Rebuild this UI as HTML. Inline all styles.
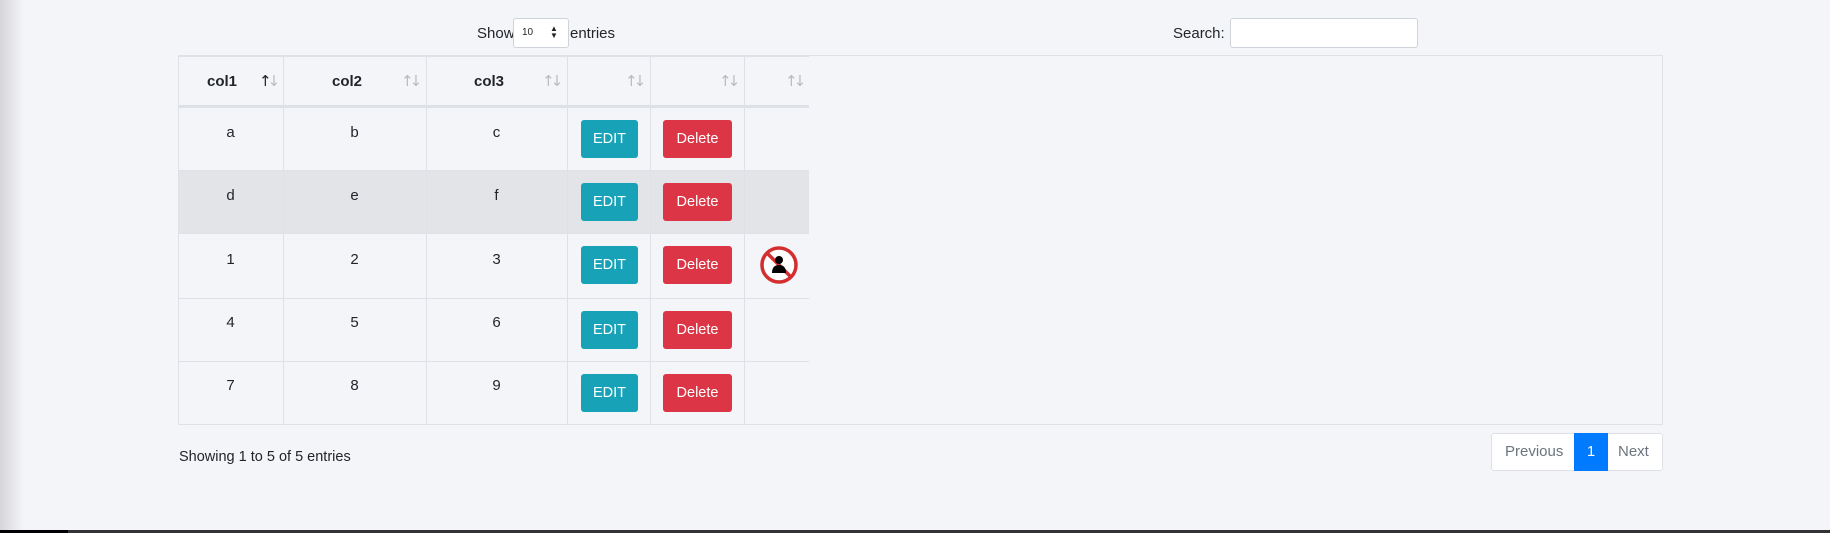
<!DOCTYPE html>
<html><head><meta charset="utf-8"><style>
*{box-sizing:border-box;margin:0;padding:0}
body{width:1830px;height:533px;overflow:hidden;background:#f4f5f9;font-family:"Liberation Sans",sans-serif;color:#212529;position:relative;font-size:15px}
.a{position:absolute}
.shade{left:0;top:0;width:24px;height:533px;background:linear-gradient(to right,#d6d6da,#f4f5f9)}
.bar{left:0;top:530px;width:1830px;height:3px;background:#333}
.bar2{left:0;top:530px;width:68px;height:3px;background:#000}
.hl{background:#dee2e6;height:1px}
.vl{background:#dee2e6;width:1px}
.t{text-align:center;font-size:15px;line-height:20px}
.b{font-weight:bold}
.btn{color:#fff;border-radius:3px;text-align:center;font-size:14.5px;line-height:38px;height:38px}
.edit{background:#17a2b8;width:57px}
.del{background:#dc3545;width:69px}
.sort{color:#bbb;font-size:15px;letter-spacing:-4px;font-family:"DejaVu Sans",sans-serif;line-height:16px}
</style></head><body>
<div class="a shade"></div>
<div class="a" style="left:477px;top:25px;font-size:15px">Show</div>
<div class="a" style="left:513px;top:18px;width:56px;height:30px;background:#fff;border:1px solid #ced4da;border-radius:3px;font-size:10px;padding:8px 0 0 8px">10<span style="position:absolute;left:36px;top:6px;font-size:8px;line-height:7px">▲<br>▼</span></div>
<div class="a" style="left:570px;top:25px;font-size:15px">entries</div>
<div class="a" style="left:1173px;top:25px;font-size:15px">Search:</div>
<div class="a" style="left:1230px;top:18px;width:188px;height:30px;background:#fff;border:1px solid #ced4da;border-radius:3px"></div>

<div class="a" style="left:178px;top:55px;width:1485px;height:370px;border:1px solid #dee2e6"></div>
<div class="a hl" style="left:178px;top:55px;width:631px;height:2px"></div>
<div class="a hl" style="left:178px;top:105px;width:631px;height:3px"></div>
<div class="a" style="left:179px;top:171px;width:630px;height:63px;background:#e3e4e8"></div>
<div class="a hl" style="left:178px;top:170px;width:631px"></div>
<div class="a hl" style="left:178px;top:233px;width:631px"></div>
<div class="a hl" style="left:178px;top:298px;width:631px"></div>
<div class="a hl" style="left:178px;top:361px;width:631px"></div>
<div class="a vl" style="left:283px;top:55px;height:370px"></div>
<div class="a vl" style="left:426px;top:55px;height:370px"></div>
<div class="a vl" style="left:567px;top:55px;height:370px"></div>
<div class="a vl" style="left:650px;top:55px;height:370px"></div>
<div class="a vl" style="left:744px;top:55px;height:370px"></div>

<div class="a t b" style="left:207px;top:72px">col1</div>
<div class="a t b" style="left:332px;top:72px">col2</div>
<div class="a t b" style="left:474px;top:72px">col3</div>
<div class="a sort" style="left:259px;top:73px"><span style="color:#222">↑</span>↓</div>
<div class="a sort" style="left:401px;top:73px">↑↓</div>
<div class="a sort" style="left:542px;top:73px">↑↓</div>
<div class="a sort" style="left:625px;top:73px">↑↓</div>
<div class="a sort" style="left:719px;top:73px">↑↓</div>
<div class="a sort" style="left:785px;top:73px">↑↓</div>

<div class="a t" style="left:178px;top:123px;width:105px">a</div><div class="a t" style="left:283px;top:123px;width:143px">b</div><div class="a t" style="left:426px;top:123px;width:141px">c</div>
<div class="a t" style="left:178px;top:186px;width:105px">d</div><div class="a t" style="left:283px;top:186px;width:143px">e</div><div class="a t" style="left:426px;top:186px;width:141px">f</div>
<div class="a t" style="left:178px;top:250px;width:105px">1</div><div class="a t" style="left:283px;top:250px;width:143px">2</div><div class="a t" style="left:426px;top:250px;width:141px">3</div>
<div class="a t" style="left:178px;top:313px;width:105px">4</div><div class="a t" style="left:283px;top:313px;width:143px">5</div><div class="a t" style="left:426px;top:313px;width:141px">6</div>
<div class="a t" style="left:178px;top:376px;width:105px">7</div><div class="a t" style="left:283px;top:376px;width:143px">8</div><div class="a t" style="left:426px;top:376px;width:141px">9</div>

<div class="a btn edit" style="left:581px;top:120px">EDIT</div><div class="a btn del" style="left:663px;top:120px">Delete</div>
<div class="a btn edit" style="left:581px;top:183px">EDIT</div><div class="a btn del" style="left:663px;top:183px">Delete</div>
<div class="a btn edit" style="left:581px;top:246px">EDIT</div><div class="a btn del" style="left:663px;top:246px">Delete</div>
<div class="a btn edit" style="left:581px;top:311px">EDIT</div><div class="a btn del" style="left:663px;top:311px">Delete</div>
<div class="a btn edit" style="left:581px;top:374px">EDIT</div><div class="a btn del" style="left:663px;top:374px">Delete</div>

<svg class="a" style="left:759px;top:245px" width="40" height="40" viewBox="0 0 40 40">
<circle cx="20" cy="20" r="17" fill="#fff" stroke="#d32f2f" stroke-width="3.5"/>
<line x1="8" y1="8" x2="32" y2="32" stroke="#d32f2f" stroke-width="3.5"/>
<circle cx="20" cy="15" r="4" fill="#000"/>
<path d="M13 28 Q13 20 20 20 Q27 20 27 28 Z" fill="#000"/>
</svg>

<div class="a" style="left:179px;top:449px;font-size:14.5px">Showing 1 to 5 of 5 entries</div>
<div class="a" style="left:1491px;top:433px;width:172px;height:38px;background:#fff;border:1px solid #dee2e6;border-radius:3px"></div>
<div class="a" style="left:1505px;top:443px;color:#6c757d;font-size:15px">Previous</div>
<div class="a" style="left:1574px;top:433px;width:34px;height:38px;background:#007bff;color:#fff;text-align:center;line-height:38px;font-size:15px">1</div>
<div class="a" style="left:1618px;top:443px;color:#6c757d;font-size:15px">Next</div>

<div class="a bar"></div><div class="a bar2"></div>
</body></html>
